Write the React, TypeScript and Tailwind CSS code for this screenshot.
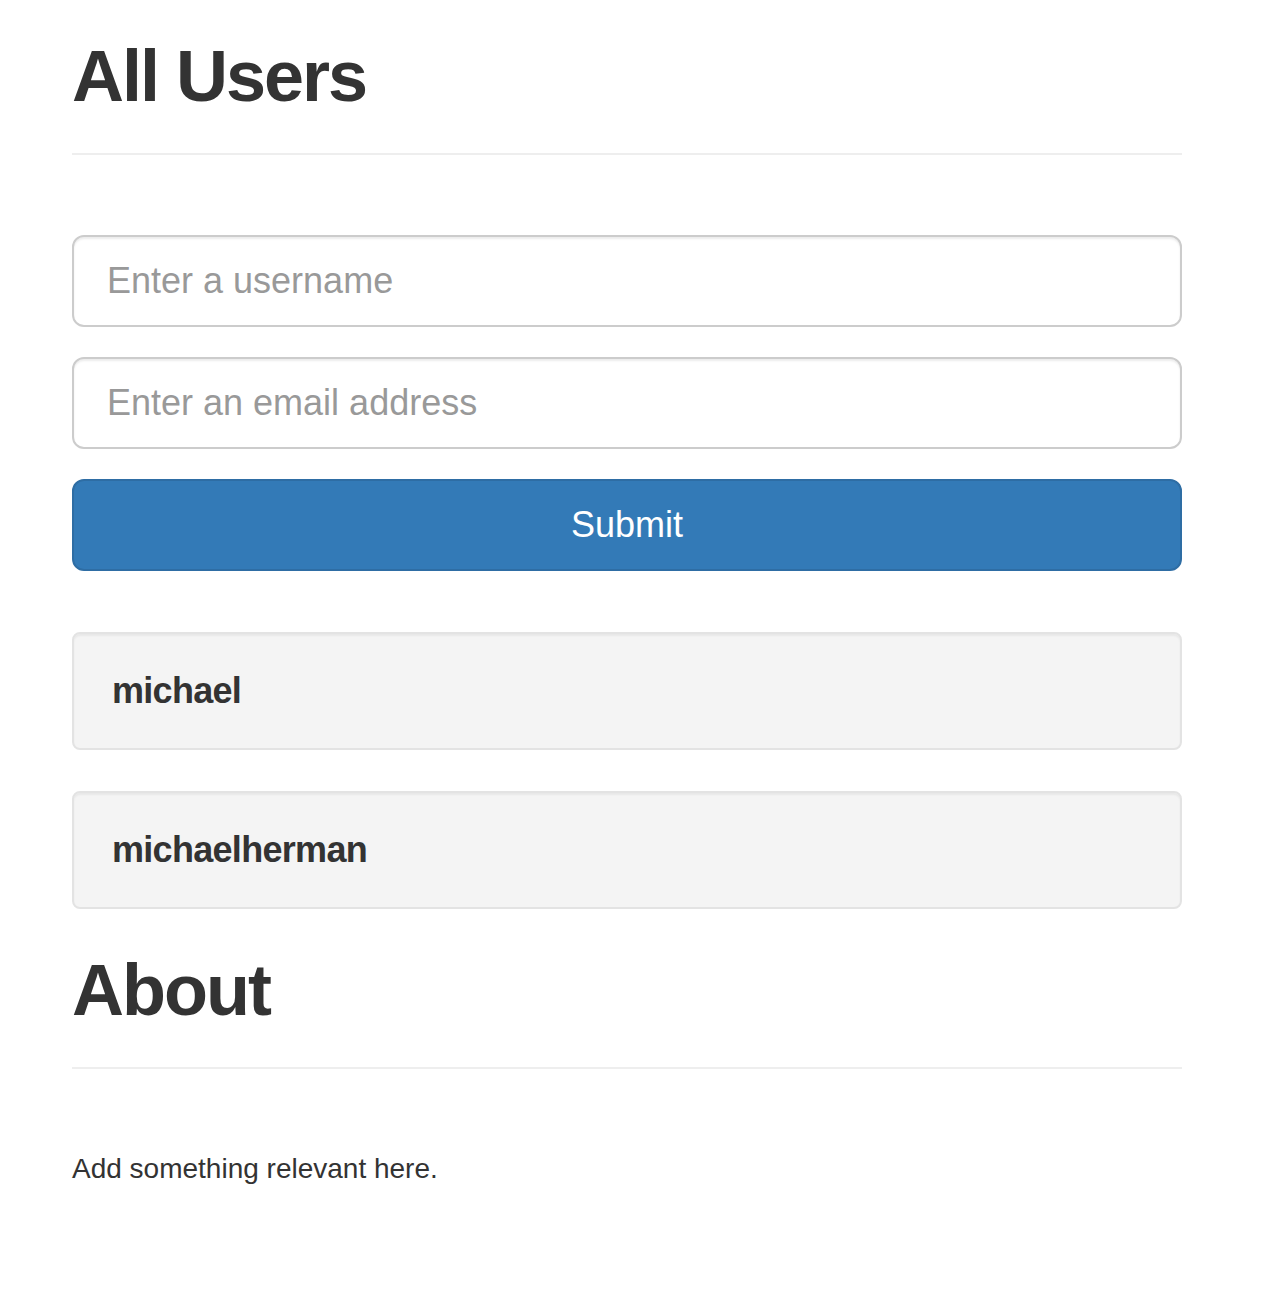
import { useState } from "react";

type User = { id: number; username: string };

const usuarios: User[] = [
  { id: 1, username: "michael" },
  { id: 2, username: "michaelherman" },
];

export default function App() {
  const [username, setUsername] = useState("");
  const [email, setEmail] = useState("");

  return (
    <div className="min-h-[1304px] bg-white text-[#333] font-['Liberation_Sans',Arial,sans-serif]">
      <div className="ml-[72px] w-[1110px] pt-[37px]">
        {/* Encabezado */}
        <div className="border-b-2 border-[#eee] pb-[17px]">
          <h1 className="mb-[20px] text-[72px] leading-[79px] font-bold tracking-[-2px]">All Users</h1>
        </div>

        {/* Formulario */}
        <form className="mt-[80px]" onSubmit={(e) => e.preventDefault()}>
          <input
            type="text"
            placeholder="Enter a username"
            value={username}
            onChange={(e) => setUsername(e.target.value)}
            className="mb-[30px] block h-[92px] w-full rounded-[12px] border-2 border-[#ccc] bg-white px-[33px] text-[36px] text-[#555] shadow-[inset_0_2px_2px_rgba(0,0,0,0.075)] outline-none placeholder:text-[#999]"
          />
          <input
            type="email"
            placeholder="Enter an email address"
            value={email}
            onChange={(e) => setEmail(e.target.value)}
            className="mb-[30px] block h-[92px] w-full rounded-[12px] border-2 border-[#ccc] bg-white px-[33px] text-[36px] text-[#555] shadow-[inset_0_2px_2px_rgba(0,0,0,0.075)] outline-none placeholder:text-[#999]"
          />
          <button
            type="submit"
            className="block h-[92px] w-full rounded-[12px] border-2 border-[#2e6da4] bg-[#337ab7] text-[36px] text-white"
          >
            Submit
          </button>
        </form>

        {/* Lista de usuarios */}
        <div className="mt-[61px] flex flex-col gap-[41px]">
          {usuarios.map((u) => (
            <div
              key={u.id}
              className="flex h-[118px] items-center rounded-[8px] border-2 border-[#e3e3e3] bg-[#f4f4f4] px-[38px] shadow-[inset_0_2px_2px_rgba(0,0,0,0.05)]"
            >
              <h4 className="text-[36px] leading-[40px] font-bold tracking-[-0.7px]">{u.username}</h4>
            </div>
          ))}
        </div>

        {/* About */}
        <div className="mt-[42px] border-b-2 border-[#eee] pb-[17px]">
          <h1 className="mb-[20px] text-[72px] leading-[79px] font-bold tracking-[-2px]">About</h1>
        </div>
        <p className="mt-[80px] text-[28px] leading-[40px]">Add something relevant here.</p>
      </div>
    </div>
  );
}
